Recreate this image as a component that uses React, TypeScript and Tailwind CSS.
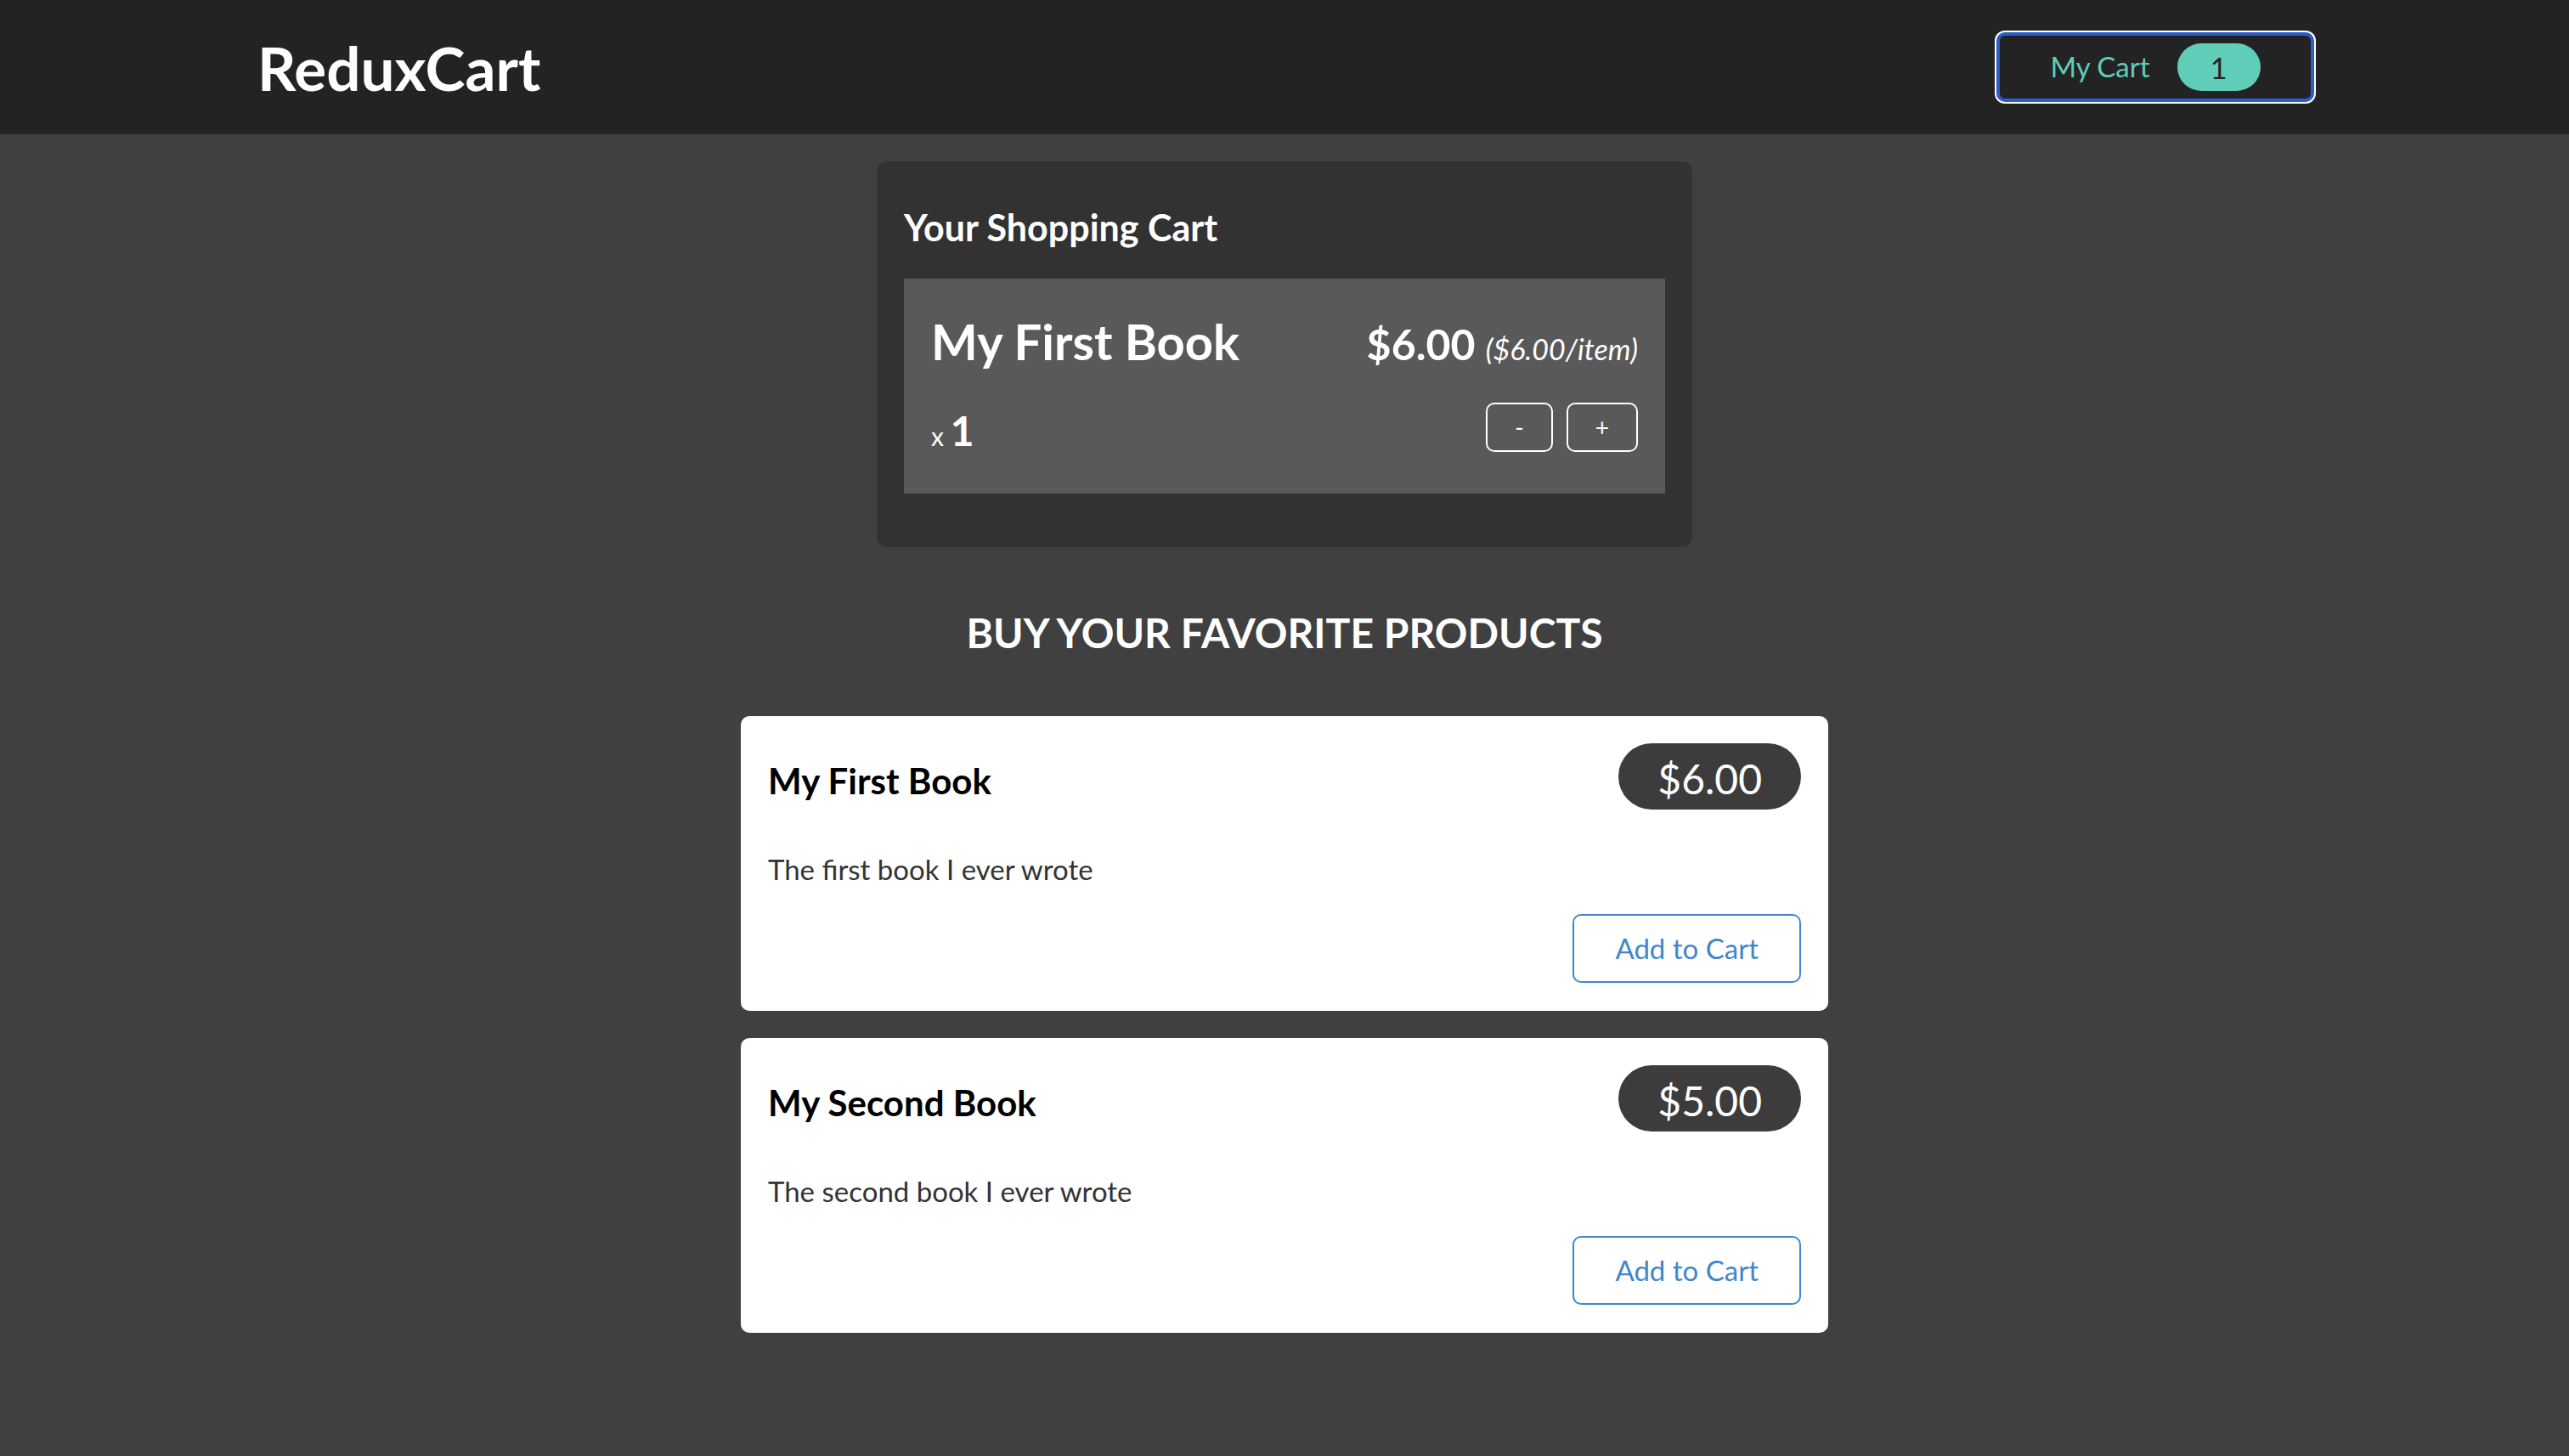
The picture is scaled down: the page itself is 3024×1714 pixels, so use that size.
import { useState } from "react";

const products = [
  { id: "p1", title: "My First Book", price: 6, description: "The first book I ever wrote" },
  { id: "p2", title: "My Second Book", price: 5, description: "The second book I ever wrote" },
];

const App = () => {
  const [quantity, setQuantity] = useState(1);
  const unitPrice = 6;

  return (
    <div className="min-h-screen bg-[#404040] font-['Lato',sans-serif] text-white">
      {/* Header */}
      <header className="flex h-[158px] items-center justify-between bg-[#232323] px-[300px]">
        <h1 className="ml-[3px] text-[71px] font-bold leading-none">ReduxCart</h1>
        <button className="flex h-[82px] w-[374px] items-center justify-center gap-[32px] rounded-[10px] border-[4px] border-[#2b5cc8] bg-[#232323] ring-2 ring-white">
          <span className="text-[33px] text-[#60cdb9]">My Cart</span>
          <span className="flex h-[56px] w-[98px] items-center justify-center rounded-full bg-[#60cdb9] text-[34px] text-[#232323]">
            {quantity}
          </span>
        </button>
      </header>

      <main className="flex flex-col items-center pt-[32px] pb-[140px]">
        {/* Cart */}
        <section className="w-[960px] rounded-[12px] bg-[#323232] px-[32px] pt-[54px] pb-[63px]">
          <h2 className="text-[43px] font-bold leading-[48px]">Your Shopping Cart</h2>
          <ul className="mt-[36px]">
            <li className="bg-[#595959] px-[32px] pt-[39px] pb-[49px]">
              <div className="flex h-[70px] items-baseline justify-between">
                <h3 className="text-[58px] font-bold leading-[70px]">My First Book</h3>
                <div className="text-[50px] font-bold leading-none">
                  ${(unitPrice * quantity).toFixed(2)}{" "}
                  <span className="text-[34px] font-normal italic leading-none">(${unitPrice.toFixed(2)}/item)</span>
                </div>
              </div>
              <div className="mt-[37px] flex h-[58px] items-center justify-between">
                <div className="pt-[8px] text-[30px] leading-none">
                  x <span className="text-[48px] font-bold leading-none">{quantity}</span>
                </div>
                <div className="flex gap-4">
                  <button
                    className="h-[58px] rounded-[10px] border-2 border-white px-[32px] text-[28px] leading-none"
                    onClick={() => setQuantity((q) => Math.max(0, q - 1))}
                  >
                    -
                  </button>
                  <button
                    className="h-[58px] rounded-[10px] border-2 border-white px-[32px] text-[28px] leading-none"
                    onClick={() => setQuantity((q) => q + 1)}
                  >
                    +
                  </button>
                </div>
              </div>
            </li>
          </ul>
        </section>

        {/* Products */}
        <h2 className="mt-[70px] text-[48px] font-bold uppercase leading-[62px]">Buy your favorite products</h2>
        <ul className="mt-[67px] flex flex-col gap-[32px]">
          {products.map((product) => (
            <li key={product.id} className="w-[1280px] rounded-[10px] bg-white px-[32px] pt-[32px] pb-[33px]">
              <header className="flex h-[78px] items-baseline justify-between">
                <h3 className="mt-[2px] text-[42px] font-bold leading-[48px] text-black">{product.title}</h3>
                <div className="rounded-full bg-[#3c3c3c] px-[46px] pt-[13px] pb-[7px] text-[48px] leading-[58px] text-white">
                  ${product.price.toFixed(2)}
                </div>
              </header>
              <p className="mt-[51px] text-[33px] leading-[38px] text-[#333333]">{product.description}</p>
              <div className="mt-[34px] flex justify-end">
                <button
                  className="h-[81px] rounded-[10px] border-2 border-[#3f87cc] px-[48px] text-[33px] text-[#3f87cc]"
                  onClick={() => setQuantity((q) => q + 1)}
                >
                  Add to Cart
                </button>
              </div>
            </li>
          ))}
        </ul>
      </main>
    </div>
  );
};

export default App;
